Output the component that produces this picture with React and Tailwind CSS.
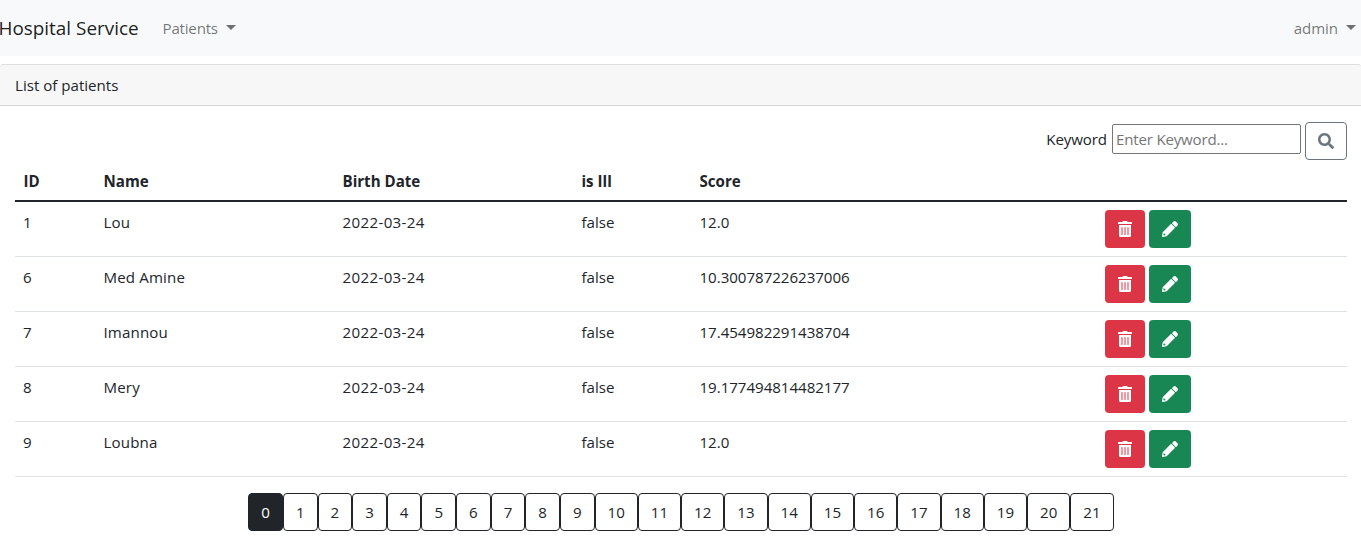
import { FaTrashAlt, FaSearch } from "react-icons/fa";

const patients = [
  { id: "1", name: "Lou", score: "12.0" },
  { id: "6", name: "Med Amine", score: "10.300787226237006" },
  { id: "7", name: "Imannou", score: "17.454982291438704" },
  { id: "8", name: "Mery", score: "19.177494814482177" },
  { id: "9", name: "Loubna", score: "12.0" },
];
const pages = Array.from({ length: 22 }, (_, i) => i);

function Caret() {
  return (
    <span className="mt-[-2px] ml-[8px] inline-block border-x-[5px] border-t-[5px] border-x-transparent border-t-current" />
  );
}

function PencilIcon() {
  return (
    <svg viewBox="0 0 512 512" className="size-4" fill="currentColor" fillRule="evenodd">
      <path d="M497.9 142.1l-46.1 46.1c-4.7 4.7-12.3 4.7-17 0l-111-111c-4.7-4.7-4.7-12.3 0-17l46.1-46.1c18.7-18.7 49.1-18.7 67.9 0l60.1 60.1c18.8 18.7 18.8 49.1 0 67.9zM284.2 99.8L21.6 362.4.4 483.9c-2.9 16.4 11.4 30.6 27.8 27.8l121.5-21.3 262.6-262.6c4.7-4.7 4.7-12.3 0-17l-111-111c-4.8-4.7-12.4-4.7-17.1 0zM84 424h24v30l-42 8-24-24 8-38h34z" />
    </svg>
  );
}

function NavItem({ children, className }) {
  return (
    <a href="#" className={`flex items-center text-[15.1px] leading-6 text-black/55 ${className}`}>
      {children}
      <Caret />
    </a>
  );
}

export default function App() {
  return (
    <div className="h-[546px] overflow-hidden bg-white font-['Open_Sans',sans-serif] text-[15.1px] leading-6 text-[#212529]">
      <nav className="flex h-14 items-center bg-[#f8f9fa]">
        <a href="#" className="w-[162.5px] text-[18.9px] leading-[30px] whitespace-nowrap text-black/90">
          <span className="-ml-[1.5px]">Hospital Service</span>
        </a>
        <NavItem className="tracking-[-0.2px]">Patients</NavItem>
        <NavItem className="mr-[5px] ml-auto tracking-[-0.1px]">admin</NavItem>
      </nav>

      <main className="mt-2">
        <div className="h-[42px] rounded-t-[3px] border-y border-t-[#dfdfdf] border-b-[#d5d5d5] bg-[#f7f7f7] px-[15px] py-2">
          List of patients
        </div>
        <div className="px-[15px] pt-4">
          <form className="flex h-[38px] justify-end">
            <label className="mt-[5px] mr-[5px] tracking-[-0.1px]">Keyword</label>
            <input
              placeholder="Enter Keyword..."
              className="mt-[2px] mr-1 h-[30px] w-[189px] rounded-[2px] border border-[#767676] bg-white px-[3px] tracking-[-0.2px] placeholder:text-[#757575]"
            />
            <button
              type="button"
              className="-mr-px flex h-[38px] w-[42px] items-center justify-center rounded-[4px] border border-[#6c757d] text-base text-[#6c757d]"
            >
              <FaSearch />
            </button>
          </form>

          <table className="w-[1332px] table-fixed border-collapse text-left">
            <colgroup>
              <col className="w-[80px]" />
              <col className="w-[239px]" />
              <col className="w-[239px]" />
              <col className="w-[118px]" />
              <col className="w-[406px]" />
              <col />
            </colgroup>
            <thead>
              <tr className="h-[41px] border-b-2 border-[#212529] font-bold">
                {["ID", "Name", "Birth Date", "is Ill", "Score", ""].map((h) => (
                  <th key={h} className="pt-[8px] pr-2 pb-[7px] pl-[8.5px]">{h}</th>
                ))}
              </tr>
            </thead>
            <tbody>
              {patients.map((p) => (
                <tr key={p.id} className="h-[55px] border-b border-[#dee2e6] align-top">
                  <td className="p-2">{p.id}</td>
                  <td className="p-2 pl-[8.5px] tracking-[0.15px]">{p.name}</td>
                  <td className="p-2 pl-[8.5px] tracking-[0.35px]">2022-03-24</td>
                  <td className="p-2 pl-[8.5px]">false</td>
                  <td className="p-2 pl-[8.5px] tracking-[-0.03px]">{p.score}</td>
                  <td className="p-2">
                    <div className="flex gap-1 text-base text-white">
                      <button className="flex h-[38px] w-10 items-center justify-center rounded-[4px] bg-[#dc3545]">
                        <FaTrashAlt />
                      </button>
                      <button className="flex h-[38px] w-[42px] items-center justify-center rounded-[4px] bg-[#198754]">
                        <PencilIcon />
                      </button>
                    </div>
                  </td>
                </tr>
              ))}
            </tbody>
          </table>

          <ul className="mt-4 ml-[233.3px] flex">
            {pages.map((n) => (
              <li
                key={n}
                className={`flex h-[38px] items-center justify-center rounded-[4px] border border-[#212529] ${
                  n > 9 ? "w-[43.25px]" : "w-[34.625px]"
                } ${n === 0 ? "bg-[#212529] text-white" : ""}`}
              >
                {n}
              </li>
            ))}
          </ul>
        </div>
      </main>
    </div>
  );
}
